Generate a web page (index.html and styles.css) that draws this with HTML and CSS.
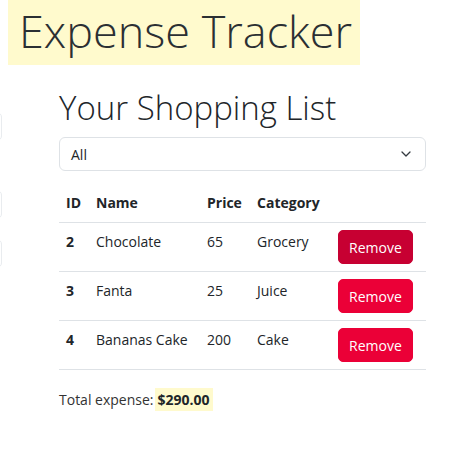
FILE: index.html
```html
<!DOCTYPE html>
<html lang="en">
<head>
<meta charset="utf-8">
<title>Expense Tracker</title>
<link rel="stylesheet" href="styles.css">
</head>
<body>
<header class="top">
  <h1 class="title">Expense Tracker</h1>
</header>
<div class="layout">
  <aside class="side">
    <div class="field field-1"></div>
    <div class="field field-2"></div>
    <div class="field field-3"></div>
  </aside>
  <main class="main">
    <h2 class="list-title">Your Shopping List</h2>
    <div class="select">
      <span class="select-value">All</span>
      <svg class="chev" width="10" height="6" viewBox="0 0 10 6"><path d="M1 1 L5 5 L9 1" fill="none" stroke="#343a40" stroke-width="1.3" stroke-linecap="round" stroke-linejoin="round"/></svg>
    </div>
    <table class="items">
      <thead>
        <tr><th class="c-id">ID</th><th class="c-name">Name</th><th class="c-price">Price</th><th class="c-cat">Category</th><th class="c-act"></th></tr>
      </thead>
      <tbody>
        <tr><td class="id">2</td><td>Chocolate</td><td>65</td><td>Grocery</td><td class="act"><button class="btn btn-hover">Remove</button></td></tr>
        <tr><td class="id">3</td><td>Fanta</td><td>25</td><td>Juice</td><td class="act"><button class="btn">Remove</button></td></tr>
        <tr><td class="id">4</td><td>Bananas Cake</td><td>200</td><td>Cake</td><td class="act"><button class="btn">Remove</button></td></tr>
      </tbody>
    </table>
    <p class="total">Total expense:<mark class="amount">$290.00</mark></p>
  </main>
</div>
</body>
</html>
```
FILE: styles.css
```css
* { box-sizing: border-box; }
body {
  margin: 0;
  font-family: "Open Sans", "Noto Sans", sans-serif;
  font-size: 14px;
  color: #212529;
  background: #fff;
}
.top { display: block; }
.title {
  display: inline-block;
  margin: 0 0 0 8px;
  padding: 0 8px 3px 11px;
  font-size: 45px;
  font-weight: 300;
  line-height: 62px;
  color: #2b2f33;
  background: #fffacd;
}
.layout { display: flex; align-items: flex-start; }
.side {
  flex: 0 0 200px;
  margin-left: -198px;
  display: flex;
  flex-direction: column;
}
.field {
  height: 29px;
  border: 1px solid #e9ecef;
  border-radius: 5px;
}
.field-1 { margin-top: 47px; }
.field-2 { margin-top: 49px; }
.field-3 { margin-top: 20px; }
.main {
  margin-left: 57px;
  width: 367px;
}
.list-title {
  margin: 21px 0 0 0;
  font-size: 33px;
  font-weight: 300;
  line-height: 44px;
  color: #212529;
}
.select {
  margin-top: 7px;
  height: 34px;
  border: 1px solid #dee2e6;
  border-radius: 6px;
  display: flex;
  align-items: center;
  justify-content: space-between;
  padding: 0 14px 0 11px;
}
.select-value { font-size: 14px; }
.chev { display: block; }
.items {
  margin-top: 13px;
  width: 367px;
  border-collapse: collapse;
  table-layout: fixed;
}
.c-id { width: 30px; }
.c-name { width: 111px; }
.c-price { width: 50px; }
.c-cat { width: 80px; }
.c-act { width: 96px; }
th, td {
  text-align: left;
  vertical-align: top;
  padding: 8px 7px;
  line-height: 22px;
  border-bottom: 1px solid #dee2e6;
  font-size: 14px;
}
th { font-weight: 700; }
td.id { font-weight: 700; }
td.act { padding: 7px 8px 7px 8px; }
.btn {
  display: block;
  height: 34px;
  padding: 0 10px;
  font-family: inherit;
  font-size: 14px;
  font-weight: 400;
  color: #fff;
  background: #eb0037;
  border: 1px solid #eb0037;
  border-radius: 5px;
}
.btn-hover { background: #c70032; border-color: #c70032; }
.total {
  margin: 19px 0 0 0;
  font-size: 14px;
  line-height: 22px;
  color: #333;
}
.amount {
  font-weight: 700;
  background: #fffacd;
  color: #212529;
  padding: 2px 3px;
  margin-left: 1px;
}
```
